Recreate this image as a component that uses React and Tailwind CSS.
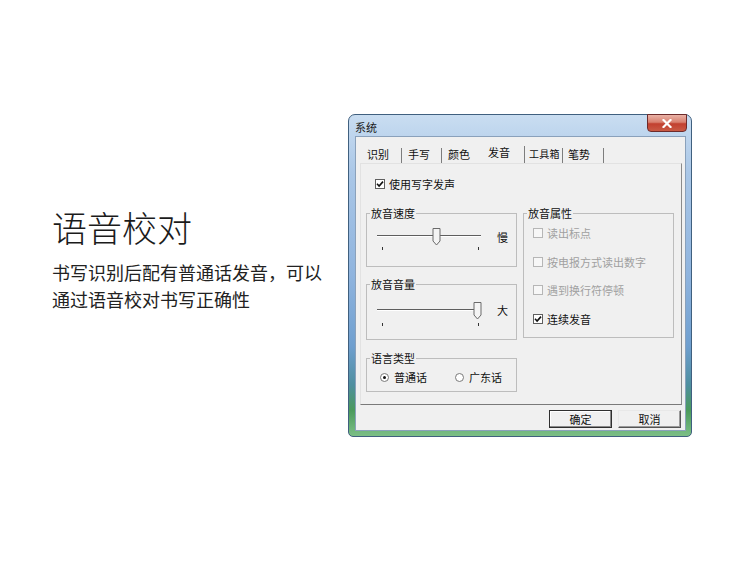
import React from "react";

const cjk = "font-['Noto_Sans_CJK_SC','Noto_Sans_CJK_JP',sans-serif]";

const Check = ({ checked, disabled }) => (
  <span
    className={
      disabled
        ? "w-[10px] h-[10px] border border-[#b6b6b6] bg-[#f7f7f7] shrink-0"
        : "w-[10px] h-[10px] border border-[#5f5f5f] bg-white shrink-0 flex items-center justify-center"
    }
  >
    {checked && (
      <svg width="8" height="8" viewBox="0 0 8 8">
        <path d="M1 3.8 L3.1 6 L7 1.6" fill="none" stroke="#111" strokeWidth="1.6" />
      </svg>
    )}
  </span>
);

const Radio = ({ on }) => (
  <span className="w-[9px] h-[9px] rounded-full border border-[#7a7a7a] bg-white shrink-0 flex items-center justify-center">
    {on && <span className="w-[3px] h-[3px] rounded-full bg-[#111]" />}
  </span>
);

const Group = ({ label, className, children }) => (
  <div className={"relative border border-[#bdbdbd] " + className}>
    <span className="absolute -top-[7px] left-[3px] px-[1px] bg-[#f0f0f0] leading-[12px] text-[#111]">
      {label}
    </span>
    {children}
  </div>
);

const Slider = ({ thumb, end, tickY }) => (
  <svg width="112" height="30" viewBox="0 0 112 30">
    {/* track */}
    <rect x="3" y="9" width={end - 3} height="1" fill="#5e5e5e" />
    <rect x="3" y="10" width={end - 3} height="1" fill="#ffffff" />
    {/* thumb */}
    <path
      d={`M${thumb} 2.5 H${thumb + 7} V15 L${thumb + 3.5} 19 L${thumb} 15 Z`}
      fill="#f4f4f4"
      stroke="#6a6a6a"
      strokeWidth="1"
    />
    {/* ticks */}
    <rect x="8" y={tickY} width="1" height="3" fill="#333" />
    <rect x="104" y={tickY} width="1" height="3" fill="#333" />
  </svg>
);

const Tab = ({ label, w, pl, sep, active, small }) => (
  <div
    className={
      (sep ? "border-r border-[#7d7d7d] " : "") +
      (active ? "h-[17px] " : "h-[15px] ") +
      (small ? "text-[10px] tracking-[0.2px] " : "") +
      "leading-[12px] shrink-0 whitespace-nowrap"
    }
    style={{ width: w, paddingLeft: pl }}
  >
    {label}
  </div>
);

const App = () => {
  return (
    <div className={"w-[750px] h-[563px] bg-white flex items-start " + cjk}>
      {/* left copy */}
      <div className="ml-[52px] w-[296px] mt-[205px] shrink-0">
        <h1 className="text-[35px] leading-[44px] font-light text-[#1b1b1b]">语音校对</h1>
        <p className="mt-[10px] text-[18px] leading-[27px] text-[#222] whitespace-nowrap">
          书写识别后配有普通话发音，可以
          <br />
          通过语音校对书写正确性
        </p>
      </div>

      {/* dialog window */}
      <div className="mt-[114px] w-[344px] h-[323px] shrink-0 rounded-t-[7px] rounded-b-[5px] border border-[#40607f] bg-[linear-gradient(180deg,#c9ddf1_0%,#aac7e7_18%,#8fb4de_50%,#6f9fcf_72%,#4f8fa0_84%,#4b9a5c_92%,#7cbf86_100%)] flex flex-col text-[11px] text-[#111]">
        {/* title bar */}
        <div className="h-[21px] flex items-start shrink-0">
          <span className="pl-[6px] pt-[6px] leading-[12px] text-[#1a1a1a]">系统</span>
          <div className="ml-auto mr-[4px] -mt-px w-[40px] h-[18px] rounded-b-[4px] border border-[#6d2b2b] bg-[linear-gradient(180deg,#eab2a6_0%,#d9806f_45%,#c2402f_55%,#c95a45_100%)] flex items-center justify-center">
            <svg width="10" height="9" viewBox="0 0 10 9">
              <path d="M1.5 1 L8.5 8 M8.5 1 L1.5 8" stroke="#fff" strokeWidth="2.2" strokeLinecap="square" />
            </svg>
          </div>
        </div>

        {/* client area */}
        <div className="ml-[6px] mr-[5px] mb-[5px] flex-1 border border-[#8aa1bb] bg-[#f0f0f0] flex flex-col">
          {/* tabs */}
          <div className="mt-[9px] ml-[4px] h-[17px] flex items-end">
            <Tab label="识别" w={42} pl={7} sep />
            <Tab label="手写" w={40} pl={6} sep />
            <Tab label="颜色" w={40} pl={6} />
            <Tab label="发音" w={43} pl={6} sep active />
            <Tab label="工具箱" w={38} pl={4} sep small />
            <Tab label="笔势" w={41} pl={5} sep />
          </div>

          {/* tab panel */}
          <div className="ml-[4px] w-[322px] h-[242px] border-l border-t border-l-[#e2e2e2] border-t-[#e2e2e2] border-r border-b border-r-[#8a8a8a] border-b-[#7a7a7a]">
            <div className="mt-[14px] ml-[14px] flex items-center gap-[4px] leading-[12px]">
              <Check checked />
              <span>使用写字发声</span>
            </div>

            <div className="mt-[23px] ml-[5px] flex gap-[6px]">
              {/* left column */}
              <div className="w-[151px] flex flex-col">
                <Group label="放音速度" className="h-[54px]">
                  <div className="mt-[12px] ml-[7px] flex items-start">
                    <Slider thumb={59} end={107} tickY={21} />
                    <span className="ml-[11px] mt-[5px] leading-[12px]">慢</span>
                  </div>
                </Group>
                <Group label="放音音量" className="h-[56px] mt-[17px]">
                  <div className="mt-[15px] ml-[7px] flex items-start">
                    <Slider thumb={100} end={101} tickY={23} />
                    <span className="ml-[11px] mt-[4px] leading-[12px]">大</span>
                  </div>
                </Group>
                <Group label="语言类型" className="h-[34px] mt-[18px]">
                  <div className="mt-[12px] ml-[13px] flex items-center leading-[12px]">
                    <Radio on />
                    <span className="ml-[5px]">普通话</span>
                    <span className="ml-[28px]">
                      <Radio />
                    </span>
                    <span className="ml-[5px]">广东话</span>
                  </div>
                </Group>
              </div>

              {/* right column */}
              <div className="w-[151px]">
                <Group label="放音属性" className="h-[125px]">
                  <div className="ml-[9px] flex flex-col leading-[12px]">
                    <div className="mt-[13px] flex items-center gap-[4px] text-[#a0a0a0]">
                      <Check disabled />
                      <span>读出标点</span>
                    </div>
                    <div className="mt-[17px] flex items-center gap-[4px] text-[#a0a0a0]">
                      <Check disabled />
                      <span>按电报方式读出数字</span>
                    </div>
                    <div className="mt-[16px] flex items-center gap-[4px] text-[#a0a0a0]">
                      <Check disabled />
                      <span>遇到换行符停顿</span>
                    </div>
                    <div className="mt-[17px] flex items-center gap-[4px]">
                      <Check checked />
                      <span>连续发音</span>
                    </div>
                  </div>
                </Group>
              </div>
            </div>
          </div>

          {/* buttons */}
          <div className="mt-[5px] pr-[4px] flex justify-end gap-[6px]">
            <button className="w-[63px] h-[18px] border border-[#2f2f2f] bg-[#f0f0f0] shadow-[inset_-1px_-1px_0_#8a8a8a,inset_1px_1px_0_#ffffff] leading-[12px]">
              确定
            </button>
            <button className="w-[63px] h-[18px] border border-t-[#e8e8e8] border-l-[#e8e8e8] border-r-[#555] border-b-[#555] bg-[#f0f0f0] shadow-[inset_-1px_-1px_0_#9a9a9a] leading-[12px]">
              取消
            </button>
          </div>
        </div>
      </div>
    </div>
  );
};

export default App;
